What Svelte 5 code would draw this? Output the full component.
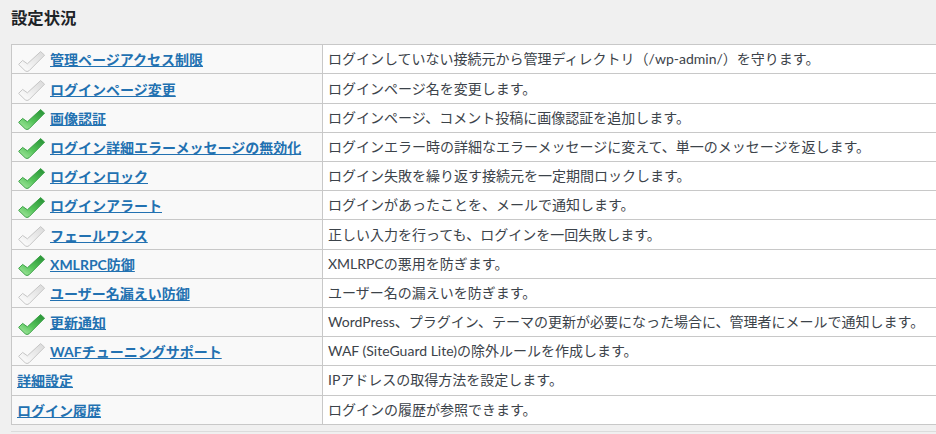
<script>
  const rows = [
    { name: "管理ページアクセス制限", desc: "ログインしていない接続元から管理ディレクトリ（/wp-admin/）を守ります。", on: false },
    { name: "ログインページ変更", desc: "ログインページ名を変更します。", on: false },
    { name: "画像認証", desc: "ログインページ、コメント投稿に画像認証を追加します。", on: true },
    { name: "ログイン詳細エラーメッセージの無効化", desc: "ログインエラー時の詳細なエラーメッセージに変えて、単一のメッセージを返します。", on: true },
    { name: "ログインロック", desc: "ログイン失敗を繰り返す接続元を一定期間ロックします。", on: true },
    { name: "ログインアラート", desc: "ログインがあったことを、メールで通知します。", on: true },
    { name: "フェールワンス", desc: "正しい入力を行っても、ログインを一回失敗します。", on: false },
    { name: "XMLRPC防御", desc: "XMLRPCの悪用を防ぎます。", on: true },
    { name: "ユーザー名漏えい防御", desc: "ユーザー名の漏えいを防ぎます。", on: false },
    { name: "更新通知", desc: "WordPress、プラグイン、テーマの更新が必要になった場合に、管理者にメールで通知します。", on: true },
    { name: "WAFチューニングサポート", desc: "WAF (SiteGuard Lite)の除外ルールを作成します。", on: false },
    { name: "詳細設定", desc: "IPアドレスの取得方法を設定します。" },
    { name: "ログイン履歴", desc: "ログインの履歴が参照できます。" },
  ];
  const checkPath = "M0.6 13.4 L4.6 9.4 L9.4 12.8 L22.6 0.6 L26.6 4.2 L11 19.8 Q9 21.2 7.2 19.8 Z";
</script>

<svg class="defs" width="0" height="0" aria-hidden="true">
  <defs>
    <linearGradient id="green" x1="0.15" y1="0.9" x2="0.85" y2="0.1">
      <stop offset="0" stop-color="#9ae396" />
      <stop offset="0.45" stop-color="#55c45a" />
      <stop offset="1" stop-color="#2f9a3c" />
    </linearGradient>
    <linearGradient id="grey" x1="0.15" y1="0.9" x2="0.85" y2="0.1">
      <stop offset="0" stop-color="#fbfbfb" />
      <stop offset="1" stop-color="#dedede" />
    </linearGradient>
  </defs>
</svg>

<div class="page">
  <h3>設定状況</h3>
  <table>
    <tbody>
      {#each rows as row}
        <tr>
          <th>
            <div class="name">
              {#if row.on !== undefined}
                <svg class="check" viewBox="0 0 27 21" width="27" height="21">
                  <path
                    d={checkPath}
                    fill={row.on ? "url(#green)" : "url(#grey)"}
                    stroke={row.on ? "#3fa24a" : "#c6c6c6"}
                    stroke-width="1"
                    stroke-linejoin="round"
                  />
                </svg>
              {/if}
              <a href="#top">{row.name}</a>
            </div>
          </th>
          <td>{row.desc}</td>
        </tr>
      {/each}
    </tbody>
  </table>
  <div class="rule"></div>
</div>

<style>
  :global(body) {
    background: #f0f0f0;
  }

  .defs {
    position: absolute;
  }

  .page {
    padding: 7px 0 0 11px;
    height: 427px;
    overflow: hidden;
    font-family: "Lato", "Noto Sans CJK JP", sans-serif;
    font-size: 14px;
    color: #3c434a;
  }

  h3 {
    margin: 0 0 16.3px 0;
    font-family: "Noto Sans CJK JP", sans-serif;
    font-size: 16.38px;
    line-height: 21px;
    font-weight: 700;
    color: #1d2327;
  }

  table {
    width: 925px;
    border-collapse: collapse;
    table-layout: fixed;
    background: #fff;
    border: 1px solid #c8c8c8;
    border-right: none;
  }

  tr {
    height: 29.2px;
  }

  th {
    width: 300px;
    padding: 0 5px;
    background: #f9f9f9;
    border: 1px solid #c8c8c8;
    text-align: left;
    font-weight: 700;
  }

  td {
    padding: 0 5px;
    border: 1px solid #c8c8c8;
    border-right: none;
    white-space: nowrap;
    overflow: hidden;
    line-height: 20px;
  }

  .name {
    display: flex;
    align-items: center;
    gap: 5px;
    height: 28px;
  }

  .check {
    flex: none;
    margin: 4px 0 0 1px;
  }

  a {
    color: #2271b1;
    text-decoration: underline;
  }

  .rule {
    margin: 6px 0 0 0;
    height: 1px;
    background: #dcdcdc;
  }
</style>
